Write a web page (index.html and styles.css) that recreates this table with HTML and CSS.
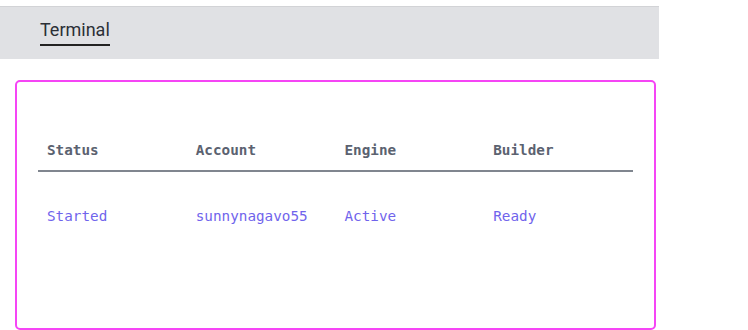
FILE: index.html
```html
<!DOCTYPE html>
<html lang="en">
<head>
  <meta charset="UTF-8">
  <title>Terminal</title>
  <link rel="stylesheet" href="styles.css">
</head>
<body>
  <!-- Tabs -->
  <div class="tabbar">
    <span class="tab active">Terminal</span>
  </div>

  <!-- Status card -->
  <div class="card">
    <table class="status-table">
      <thead>
        <tr>
          <th>Status</th>
          <th>Account</th>
          <th>Engine</th>
          <th>Builder</th>
        </tr>
      </thead>
      <tbody>
        <tr>
          <td>Started</td>
          <td>sunnynagavo55</td>
          <td>Active</td>
          <td>Ready</td>
        </tr>
      </tbody>
    </table>
  </div>
</body>
</html>
```

FILE: styles.css
```css
body {
  margin: 0;
  padding: 6px 0 0 0;
  background: #fff;
  font-family: Roboto, "Liberation Sans", sans-serif;
}

.tabbar {
  width: 659px;
  height: 53px;
  box-sizing: border-box;
  background: #e0e1e4;
  border-top: 1px solid #d2d3d6;
  padding: 13px 0 0 40px;
}

.tab {
  display: inline-block;
  font-size: 18px;
  color: #2b2f36;
  padding-bottom: 4px;
  line-height: 20px;
}

.tab.active {
  border-bottom: 2px solid #222;
}

.card {
  margin: 21px 0 0 15px;
  width: 641px;
  height: 250px;
  box-sizing: border-box;
  border: 2px solid #f545f5;
  border-radius: 5px;
  padding: 60px 20px 0 21px;
}

.status-table {
  width: 595px;
  border-collapse: collapse;
  table-layout: fixed;
  font-family: "DejaVu Sans Mono", monospace;
  font-size: 14.3px;
}

.status-table th {
  text-align: left;
  color: #5b6270;
  font-weight: bold;
  padding: 0 0 12px 9px;
  border-bottom: 2px solid #80868f;
}

.status-table td {
  color: #7064ec;
  padding: 36px 0 0 9px;
}
```
